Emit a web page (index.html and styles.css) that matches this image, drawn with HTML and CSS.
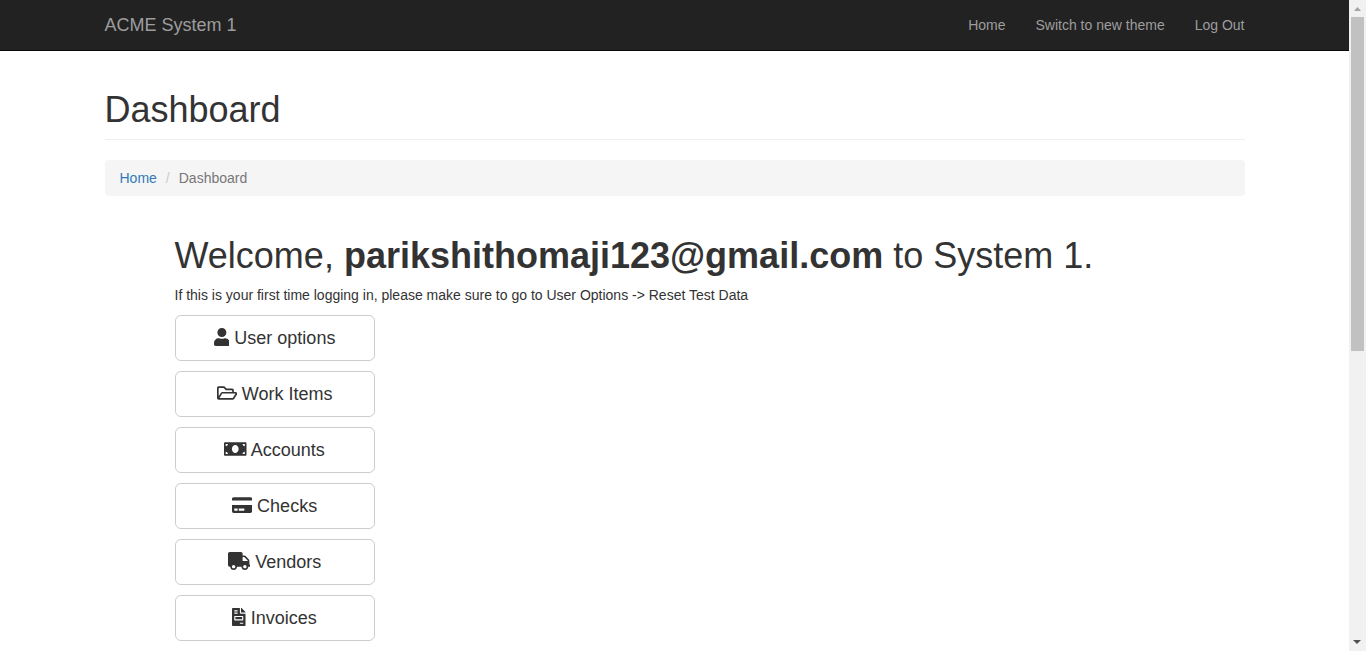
FILE: index.html
```html
<!DOCTYPE html>
<html lang="en">
<head>
<meta charset="utf-8">
<title>ACME System 1 - Dashboard</title>
<link rel="stylesheet" href="styles.css">
</head>
<body>
<div class="window">
<div class="page">
  <nav class="navbar">
    <div class="container navbar-inner">
      <a class="brand" href="#">ACME System 1</a>
      <ul class="nav">
        <li><a href="#">Home</a></li>
        <li><a href="#">Switch to new theme</a></li>
        <li><a href="#">Log Out</a></li>
      </ul>
    </div>
  </nav>
  <main class="container">
    <header class="page-header"><h1>Dashboard</h1></header>
    <ol class="breadcrumb">
      <li><a href="#">Home</a></li>
      <li>Dashboard</li>
    </ol>
    <section class="welcome">
      <h1>Welcome, <b>parikshithomaji123@gmail.com</b> to System 1.</h1>
      <p>If this is your first time logging in, please make sure to go to User Options -&gt; Reset Test Data</p>
      <div class="actions">
        <button class="btn" type="button"><svg class="icon" viewBox="0 0 448 512" aria-hidden="true"><path d="M224 256c70.7 0 128-57.300 128-128S294.700 0 224 0 96 57.300 96 128s57.300 128 128 128zm89.600 32h-16.700c-22.200 10.200-46.900 16-72.900 16s-50.600-5.800-72.900-16h-16.700C60.200 288 0 348.200 0 422.400V464c0 26.500 21.500 48 48 48h352c26.500 0 48-21.500 48-48v-41.600c0-74.200-60.200-134.400-134.400-134.400z"/></svg> User options</button>
        <button class="btn" type="button"><svg class="icon" viewBox="0 0 576 512" aria-hidden="true"><path d="M527.900 224H480v-48c0-26.500-21.500-48-48-48H272l-64-64H48C21.500 64 0 85.500 0 112v288c0 26.500 21.500 48 48 48h400c16.500 0 31.900-8.500 40.700-22.600l79.900-128c20-31.900-3-73.400-40.700-73.400zM48 118c0-3.300 2.700-6 6-6h134.100l64 64H426c3.300 0 6 2.700 6 6v42H152c-16.800 0-32.400 8.800-41.100 23.200L48 351.400zm400 282H72l77.200-128H528z"/></svg> Work Items</button>
        <button class="btn" type="button"><svg class="icon" viewBox="0 0 640 512" aria-hidden="true"><path d="M608 64H32C14.300 64 0 78.300 0 96v320c0 17.700 14.300 32 32 32h576c17.700 0 32-14.300 32-32V96c0-17.700-14.300-32-32-32zM48 400v-64c35.300 0 64 28.700 64 64H48zm0-224v-64h64c0 35.300-28.700 64-64 64zm272 192c-53 0-96-50.200-96-112s43-112 96-112 96 50.100 96 112c0 61.900-43 112-96 112zm272 32h-64c0-35.300 28.700-64 64-64v64zm0-224c-35.300 0-64-28.700-64-64h64v64z"/></svg> Accounts</button>
        <button class="btn" type="button"><svg class="icon" viewBox="0 0 576 512" aria-hidden="true"><path d="M0 432c0 26.500 21.500 48 48 48h480c26.500 0 48-21.500 48-48V256H0v176zm192-68c0-6.600 5.400-12 12-12h136c6.600 0 12 5.400 12 12v40c0 6.600-5.400 12-12 12H204c-6.600 0-12-5.400-12-12v-40zm-128 0c0-6.600 5.400-12 12-12h72c6.600 0 12 5.400 12 12v40c0 6.600-5.400 12-12 12H76c-6.600 0-12-5.400-12-12v-40zM576 80v48H0V80c0-26.500 21.500-48 48-48h480c26.500 0 48 21.500 48 48z"/></svg> Checks</button>
        <button class="btn" type="button"><svg class="icon" viewBox="0 0 640 512" aria-hidden="true"><path d="M624 352h-16V243.900c0-12.700-5.100-24.900-14.100-33.900L494 110.100c-9-9-21.200-14.100-33.900-14.100H416V48c0-26.500-21.500-48-48-48H48C21.500 0 0 21.500 0 48v320c0 26.500 21.500 48 48 48h16c0 53 43 96 96 96s96-43 96-96h128c0 53 43 96 96 96s96-43 96-96h48c8.800 0 16-7.200 16-16v-32c0-8.800-7.200-16-16-16zM160 464c-26.500 0-48-21.500-48-48s21.500-48 48-48 48 21.500 48 48-21.500 48-48 48zm320 0c-26.500 0-48-21.500-48-48s21.500-48 48-48 48 21.500 48 48-21.500 48-48 48zm80-208H416V144h44.100l99.900 99.900V256z"/></svg> Vendors</button>
        <button class="btn" type="button"><svg class="icon" viewBox="0 0 384 512" aria-hidden="true"><path d="M288 256H96v64h192v-64zm89-151L279.100 7c-4.500-4.500-10.600-7-17-7H256v128h128v-6.100c0-6.300-2.500-12.400-7-16.900zm-153 31V0H24C10.700 0 0 10.700 0 24v464c0 13.300 10.700 24 24 24h336c13.300 0 24-10.700 24-24V160H248c-13.200 0-24-10.800-24-24zM64 72c0-4.400 3.600-8 8-8h80c4.400 0 8 3.600 8 8v16c0 4.400-3.600 8-8 8H72c-4.400 0-8-3.600-8-8V72zm0 64c0-4.400 3.600-8 8-8h80c4.400 0 8 3.600 8 8v16c0 4.400-3.600 8-8 8H72c-4.400 0-8-3.600-8-8v-16zm256 304c0 4.400-3.600 8-8 8h-80c-4.400 0-8-3.600-8-8v-16c0-4.400 3.600-8 8-8h80c4.400 0 8 3.600 8 8v16zm0-200v96c0 8.800-7.200 16-16 16H80c-8.800 0-16-7.200-16-16v-96c0-8.800 7.200-16 16-16h224c8.800 0 16 7.200 16 16z"/></svg> Invoices</button>
      </div>
    </section>
  </main>
</div>
<div class="scrollbar" aria-hidden="true">
  <svg class="arrow arrow-up" viewBox="0 0 17 17"><path d="M5 11h7L8.500 7z"/></svg>
  <div class="track"><div class="thumb"></div></div>
  <svg class="arrow" viewBox="0 0 17 17"><path d="M4 6h8L8 10z"/></svg>
</div>
</div>
</body>
</html>
```

FILE: styles.css
```css
* { box-sizing: border-box; }
body {
  margin: 0;
  font: 14px/20px "Liberation Sans", Arial, sans-serif;
  color: #333;
  background: #fff;
}
a { color: #337ab7; text-decoration: none; }
h1 { margin: 0; font-size: 36px; line-height: 40px; font-weight: 400; }
.window { display: flex; height: 100vh; overflow: hidden; }
.page { flex: 1; min-width: 0; overflow: hidden; }
.container { max-width: 1170px; margin: 0 auto; padding: 0 15px; }
.navbar { background: #222; border-bottom: 1px solid #080808; }
.navbar-inner { display: flex; justify-content: space-between; }
.navbar a { display: block; padding: 15px 0; color: #9d9d9d; }
.navbar .brand { font-size: 18px; }
.nav { display: flex; gap: 30px; margin: 0; padding: 0; list-style: none; }
.page-header { margin: 39px 0 20px; padding-bottom: 9px; border-bottom: 1px solid #eee; }
.breadcrumb {
  display: flex;
  margin: 0 0 40px;
  padding: 8px 15px;
  list-style: none;
  color: #777;
  background: #f5f5f5;
  border-radius: 4px;
}
.breadcrumb li + li::before { content: "/"; padding: 0 9px; color: #ccc; }
.welcome { padding: 0 70px; }
.welcome p { margin: 9px 0 10px; }
.actions { display: flex; flex-direction: column; align-items: flex-start; gap: 10px; }
.btn {
  width: 200px;
  padding: 10px 16px;
  font: 18px/24px "Liberation Sans", Arial, sans-serif;
  color: #333;
  background: #fff;
  border: 1px solid #ccc;
  border-radius: 6px;
  cursor: pointer;
}
.icon { height: 18px; vertical-align: -2px; fill: currentColor; }
.scrollbar { display: flex; flex-direction: column; width: 17px; background: #f1f1f1; }
.arrow { display: block; width: 17px; height: 17px; fill: #505050; }
.arrow-up { fill: #a3a3a3; }
.track { flex: 1; padding: 0 2px; }
.thumb { height: 54.2%; background: #c1c1c1; }
```
